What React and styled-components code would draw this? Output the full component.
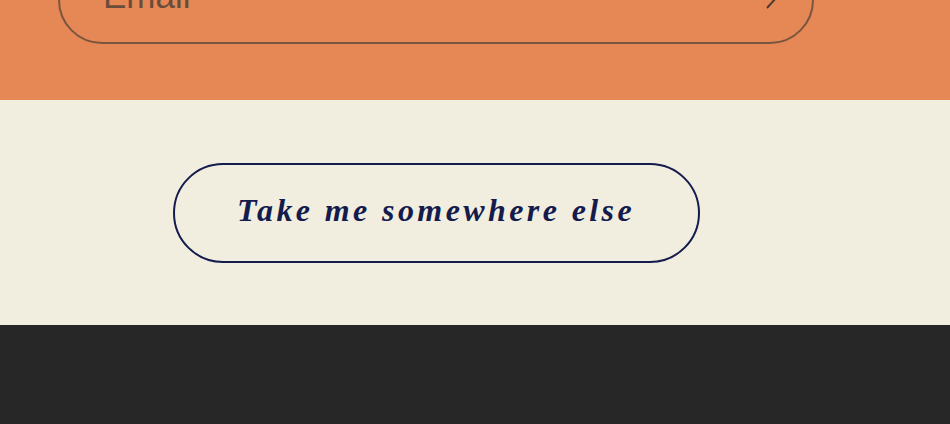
import React from 'react'
import styled, { createGlobalStyle } from 'styled-components'

const App = () => {
    return (
     <>
     <GlobalStyle />
     <Page>
       <Signup>
         <Inner>
           <EmailBox>
             <EmailLabel>Email</EmailLabel>
             <Arrow width="14" height="24" viewBox="0 0 14 24" aria-hidden="true">
               <path d="M3 2 L12 12 L3 22" />
             </Arrow>
           </EmailBox>
         </Inner>
       </Signup>
       <Elsewhere>
         <Inner>
           <PillButton>Take me somewhere else</PillButton>
         </Inner>
       </Elsewhere>
       <Footer />
     </Page>
    </>
    )
}

export default App

const GlobalStyle = createGlobalStyle`
    html, body {
        margin:0;
        padding:0;
        background:#282728;
    }
    * { box-sizing:border-box; }
`
const Page = styled.div`
    width:100%;
    display:flex;
    flex-direction:column;
    overflow:hidden;
`
const Inner = styled.div`
    width:756px;
    margin-left:58px;
    display:flex;
    justify-content:center;
`
const Signup = styled.section`
    background:#E68856;
    height:100px;
    display:flex;
    flex-direction:column;
    justify-content:flex-end;
    padding-bottom:56px;
    overflow:hidden;
`
const EmailBox = styled.div`
    flex-shrink:0;
    width:100%;
    height:88px;
    border:2px solid #7A5640;
    border-radius:44px;
    display:flex;
    align-items:center;
    justify-content:space-between;
    padding:0 34px 0 43px;
`
const EmailLabel = styled.span`
    font-family:"Liberation Sans", Arial, sans-serif;
    font-size:35px;
    line-height:1;
    color:#6B4C3B;
    padding-bottom:10px;
`
const Arrow = styled.svg`
    fill:none;
    stroke:#4E3A2E;
    stroke-width:2;
    margin-top:-4px;
`
const Elsewhere = styled.section`
    background:#F1EEDF;
    height:225px;
    display:flex;
    flex-direction:column;
    justify-content:center;
`
const PillButton = styled.button`
    width:527px;
    height:100px;
    border:2px solid #141B4D;
    border-radius:50px;
    background:transparent;
    color:#141B4D;
    font-family:"Liberation Serif", "Times New Roman", serif;
    font-style:italic;
    font-weight:700;
    font-size:32px;
    letter-spacing:3.4px;
    cursor:pointer;
    padding:0 0 4px 0;
`
const Footer = styled.footer`
    background:#282728;
    height:99px;
`
